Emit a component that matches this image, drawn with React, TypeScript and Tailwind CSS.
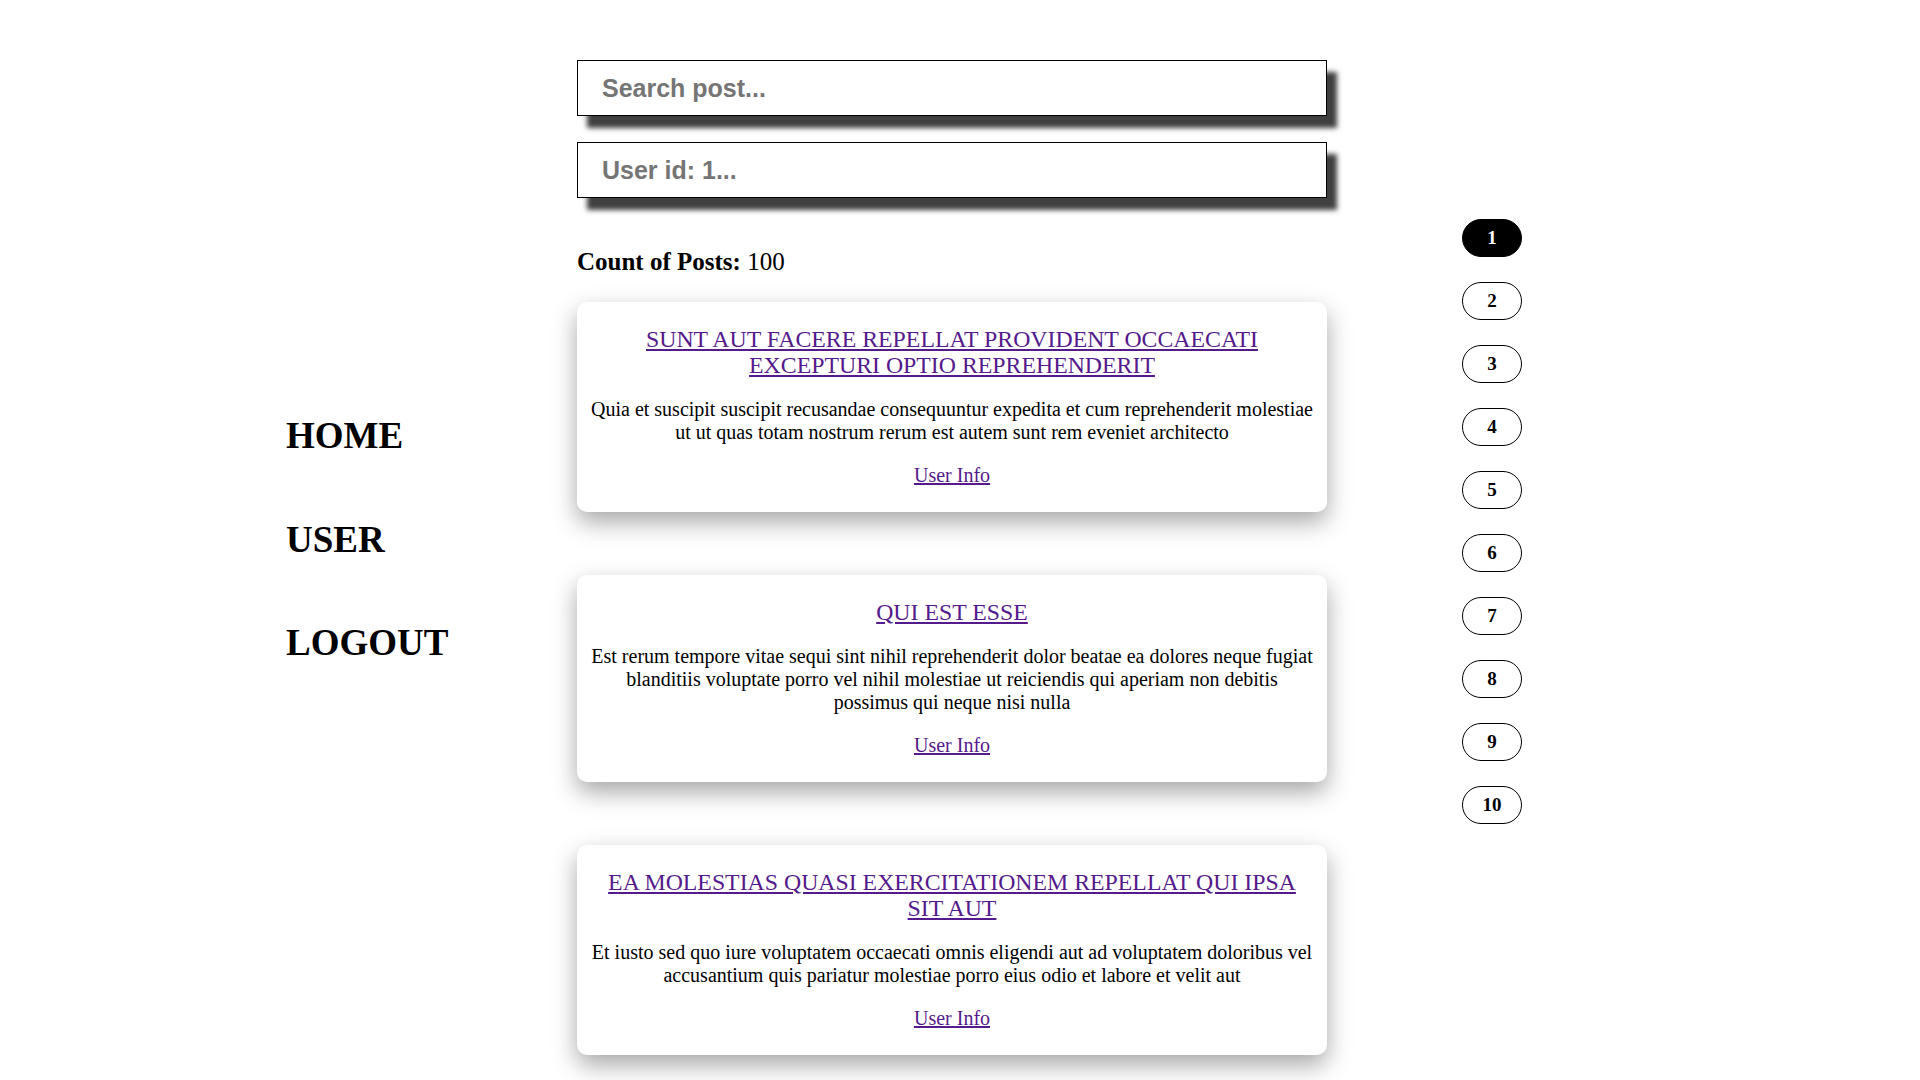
import { useState } from "react";

type Post = { id: number; title: string; body: string };

// first page of posts (10 per page)
const posts: Post[] = [
  {
    id: 1,
    title: "sunt aut facere repellat provident occaecati excepturi optio reprehenderit",
    body: "quia et suscipit suscipit recusandae consequuntur expedita et cum reprehenderit molestiae ut ut quas totam nostrum rerum est autem sunt rem eveniet architecto",
  },
  {
    id: 2,
    title: "qui est esse",
    body: "est rerum tempore vitae sequi sint nihil reprehenderit dolor beatae ea dolores neque fugiat blanditiis voluptate porro vel nihil molestiae ut reiciendis qui aperiam non debitis possimus qui neque nisi nulla",
  },
  {
    id: 3,
    title: "ea molestias quasi exercitationem repellat qui ipsa sit aut",
    body: "et iusto sed quo iure voluptatem occaecati omnis eligendi aut ad voluptatem doloribus vel accusantium quis pariatur molestiae porro eius odio et labore et velit aut",
  },
  {
    id: 4,
    title: "eum et est occaecati",
    body: "ullam et saepe reiciendis voluptatem adipisci sit amet autem assumenda provident rerum culpa quis hic commodi nesciunt rem tenetur doloremque ipsam iure quis sunt voluptatem rerum illo velit",
  },
  {
    id: 5,
    title: "nesciunt quas odio",
    body: "repudiandae veniam quaerat sunt sed alias aut fugiat sit autem sed est voluptatem omnis possimus esse voluptatibus quis est aut tenetur dolor neque",
  },
  {
    id: 6,
    title: "dolorem eum magni eos aperiam quia",
    body: "ut aspernatur corporis harum nihil quis provident sequi mollitia nobis aliquid molestiae perspiciatis et ea nemo ab reprehenderit accusantium quas voluptate dolores velit et doloremque molestiae",
  },
  {
    id: 7,
    title: "magnam facilis autem",
    body: "dolore placeat quibusdam ea quo vitae magni quis enim qui quis quo nemo aut saepe quidem repellat excepturi ut quia sunt ut sequi eos ea sed quas",
  },
  {
    id: 8,
    title: "dolorem dolore est ipsam",
    body: "dignissimos aperiam dolorem qui eum facilis quibusdam animi sint suscipit qui sint possimus cum quaerat magni maiores excepturi ipsam ut commodi dolor voluptatum modi aut vitae",
  },
  {
    id: 9,
    title: "nesciunt iure omnis dolorem tempora et accusantium",
    body: "consectetur animi nesciunt iure dolore enim quia ad veniam autem ut quam aut nobis et est aut quod aut provident voluptas autem voluptas",
  },
  {
    id: 10,
    title: "optio molestias id quia eum",
    body: "quo et expedita modi cum officia vel magni doloribus qui repudiandae vero nisi sit quos veniam quod sed accusamus veritatis error",
  },
];

function capitalize(text: string) {
  return text.charAt(0).toUpperCase() + text.slice(1);
}

function PostCard({ post }: { post: Post }) {
  return (
    <div className="flex flex-col gap-5 rounded-[10px] bg-white px-3 pt-6 pb-[25px] text-center shadow-[0_10px_25px_rgba(0,0,0,0.35)]">
      <h2 className="px-4 text-[23.8px] leading-[26px]">
        <a href="#" className="uppercase text-[#551a8b] underline">
          {post.title}
        </a>
      </h2>
      <p className="text-[20px] leading-[23px] text-black">{capitalize(post.body)}</p>
      <div className="text-[20px] leading-[23px]">
        <a href="#" className="text-[#551a8b] underline">
          User Info
        </a>
      </div>
    </div>
  );
}

export default function App() {
  const [page, setPage] = useState(1);
  const [search, setSearch] = useState("");
  const [userId, setUserId] = useState("");

  return (
    <div className="h-screen overflow-y-scroll bg-white [&::-webkit-scrollbar]:w-[17px] [&::-webkit-scrollbar-track]:bg-[#f1f1f1] [&::-webkit-scrollbar-thumb]:bg-[#c1c1c1]">
      <div className="flex pl-[286px] font-['Liberation_Serif',serif] leading-[1.15] text-black">
        {/* side navigation */}
        <nav className="flex w-[291px] shrink-0 flex-col gap-[61px] pt-[415px] text-[37px] font-bold">
          <a href="#">HOME</a>
          <a href="#">USER</a>
          <a href="#">LOGOUT</a>
        </nav>

        {/* posts column */}
        <main className="flex w-[750px] shrink-0 flex-col pt-[60px] pb-16">
          <div className="flex flex-col gap-[26px]">
            <input
              value={search}
              onChange={(e) => setSearch(e.target.value)}
              placeholder="Search post..."
              className="h-[56px] w-full border border-black bg-white px-6 font-['Liberation_Sans',Arial,sans-serif] text-[25px] font-bold text-[#333] shadow-[10px_12px_5px_#404040] outline-none placeholder:text-[#757575]"
            />
            <input
              value={userId}
              onChange={(e) => setUserId(e.target.value)}
              placeholder="User id: 1..."
              className="h-[56px] w-full border border-black bg-white px-6 font-['Liberation_Sans',Arial,sans-serif] text-[25px] font-bold text-[#333] shadow-[10px_12px_5px_#404040] outline-none placeholder:text-[#757575]"
            />
          </div>

          <p className="mt-[50px] mb-[25px] text-[25px]">
            <span className="font-bold">Count of Posts:</span> 100
          </p>

          <div className="flex flex-col gap-[63px]">
            {posts.map((post) => (
              <PostCard key={post.id} post={post} />
            ))}
          </div>
        </main>

        {/* pagination */}
        <div className="ml-[135px] flex flex-col gap-[25px] pt-[219px]">
          {Array.from({ length: 10 }, (_, i) => (
            <button
              key={i}
              onClick={() => setPage(i + 1)}
              className={`flex h-[38px] w-[60px] items-center justify-center rounded-full border border-black text-[19px] font-bold ${
                page === i + 1 ? "bg-black text-white" : "bg-white text-black"
              }`}
            >
              {i + 1}
            </button>
          ))}
        </div>
      </div>
    </div>
  );
}
